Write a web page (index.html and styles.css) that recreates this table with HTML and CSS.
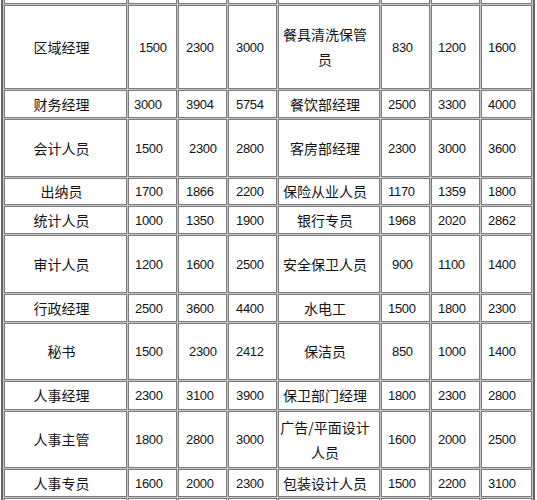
FILE: index.html
```html
<!DOCTYPE html>
<html lang="zh-CN">
<head>
<meta charset="utf-8">
<title>薪酬表</title>
<link rel="stylesheet" href="styles.css">
</head>
<body>
<table class="sheet">
  <colgroup>
    <col class="c-name1"><col class="c-num"><col class="c-num"><col class="c-num">
    <col class="c-name2"><col class="c-num"><col class="c-num"><col class="c-numlast">
  </colgroup>
  <tr class="h20"><td class="name"></td><td class="num"></td><td class="num"></td><td class="num"></td><td class="name"></td><td class="num"></td><td class="num"></td><td class="num"></td></tr>
  <tr class="h84"><td class="name">区域经理</td><td class="num sp">1500</td><td class="num">2300</td><td class="num">3000</td><td class="name">餐具清洗保管员</td><td class="num sp">830</td><td class="num">1200</td><td class="num">1600</td></tr>
  <tr class="h28"><td class="name">财务经理</td><td class="num lt">3000</td><td class="num">3904</td><td class="num">5754</td><td class="name">餐饮部经理</td><td class="num">2500</td><td class="num">3300</td><td class="num">4000</td></tr>
  <tr class="h58"><td class="name">会计人员</td><td class="num">1500</td><td class="num sp">2300</td><td class="num">2800</td><td class="name">客房部经理</td><td class="num">2300</td><td class="num">3000</td><td class="num">3600</td></tr>
  <tr class="h27"><td class="name">出纳员</td><td class="num">1700</td><td class="num">1866</td><td class="num">2200</td><td class="name">保险从业人员</td><td class="num">1170</td><td class="num">1359</td><td class="num">1800</td></tr>
  <tr class="h28"><td class="name">统计人员</td><td class="num">1000</td><td class="num">1350</td><td class="num">1900</td><td class="name">银行专员</td><td class="num">1968</td><td class="num">2020</td><td class="num">2862</td></tr>
  <tr class="h58"><td class="name">审计人员</td><td class="num">1200</td><td class="num">1600</td><td class="num">2500</td><td class="name">安全保卫人员</td><td class="num sp">900</td><td class="num">1100</td><td class="num">1400</td></tr>
  <tr class="h28"><td class="name">行政经理</td><td class="num">2500</td><td class="num">3600</td><td class="num">4400</td><td class="name">水电工</td><td class="num">1500</td><td class="num">1800</td><td class="num">2300</td></tr>
  <tr class="h57"><td class="name">秘书</td><td class="num">1500</td><td class="num sp">2300</td><td class="num">2412</td><td class="name">保洁员</td><td class="num sp">850</td><td class="num">1000</td><td class="num">1400</td></tr>
  <tr class="h29"><td class="name">人事经理</td><td class="num">2300</td><td class="num">3100</td><td class="num">3900</td><td class="name">保卫部门经理</td><td class="num">1800</td><td class="num">2300</td><td class="num">2800</td></tr>
  <tr class="h57"><td class="name">人事主管</td><td class="num">1800</td><td class="num">2800</td><td class="num">3000</td><td class="name">广告/平面设计人员</td><td class="num">1600</td><td class="num">2000</td><td class="num">2500</td></tr>
  <tr class="h28"><td class="name">人事专员</td><td class="num">1600</td><td class="num">2000</td><td class="num">2300</td><td class="name">包装设计人员</td><td class="num">1500</td><td class="num">2200</td><td class="num">3100</td></tr>
  <tr class="h20"><td class="name"></td><td class="num"></td><td class="num"></td><td class="num"></td><td class="name"></td><td class="num"></td><td class="num"></td><td class="num"></td></tr>
</table>
</body>
</html>
```

FILE: styles.css
```css
html, body {
  margin: 0;
  padding: 0;
  background: #ffffff;
}

body {
  overflow: hidden;
}

.sheet {
  border-collapse: separate;
  border-spacing: 1px;
  background: #c4c4c4;
  border: 2px solid #666666;
  margin: -19px 0 0 1px;
  table-layout: fixed;
  width: 534px;
}

.c-name1 { width: 123px; }
.c-num { width: 49px; }
.c-name2 { width: 102px; }
.c-numlast { width: 51px; }

.sheet td {
  border: 1px solid #7c7c7c;
  background: #ffffff;
  padding: 0;
  box-sizing: border-box;
  vertical-align: middle;
  color: #141414;
}

.sheet td.name {
  text-align: center;
  padding-right: 8px;
  font-family: "Noto Sans CJK SC", sans-serif;
  font-size: 14px;
  line-height: 25px;
}

.sheet td.num {
  text-align: left;
  padding-left: 6px;
  padding-top: 1px;
  font-family: "Liberation Sans", "DejaVu Sans", sans-serif;
  font-size: 13px;
  letter-spacing: -0.3px;
  line-height: 16px;
}

.sheet td.num:nth-child(3),
.sheet td.num:nth-child(4) {
  padding-left: 7px;
}

.sheet td.num.sp {
  padding-left: 10px;
}

.sheet td.num.sp:nth-child(3) {
  padding-left: 10px;
}

.sheet td.num.lt {
  padding-left: 5px;
}

.h20 td { height: 20px; }
.h27 td { height: 27px; }
.h28 td { height: 28px; }
.h29 td { height: 29px; }
.h57 td { height: 57px; }
.h58 td { height: 58px; }
.h84 td { height: 84px; }
```
